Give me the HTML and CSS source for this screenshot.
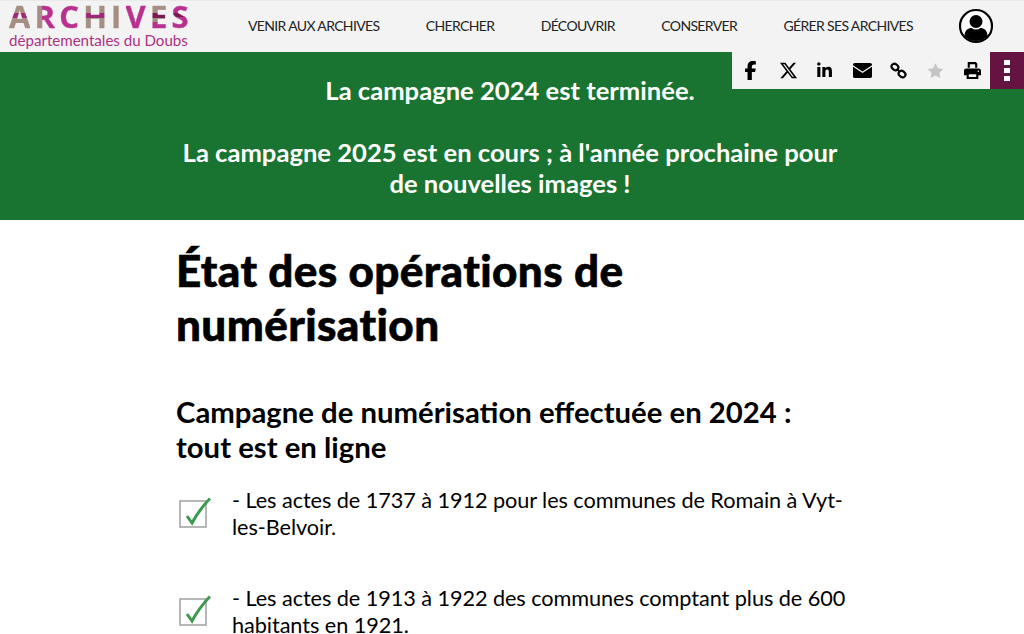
FILE: index.html
```
<!DOCTYPE html>
<html lang="fr">
<head>
<meta charset="utf-8">
<title>État des opérations de numérisation</title>
<link rel="stylesheet" href="styles.css">
</head>
<body>
<header class="header">
  <a class="logo" href="#">
    <span class="logo-title"><span class="l l-a">A</span><span class="l l-r">R</span><span class="l l-c">C</span><span class="l l-a">H</span><span class="l l-i">I</span><span class="l l-c">V</span><span class="l l-e">E</span><span class="l l-s">S</span></span>
    <span class="logo-sub">départementales du Doubs</span>
  </a>
  <nav class="nav">
    <a href="#">VENIR AUX ARCHIVES</a>
    <a href="#">CHERCHER</a>
    <a href="#">DÉCOUVRIR</a>
    <a href="#">CONSERVER</a>
    <a href="#">GÉRER SES ARCHIVES</a>
  </nav>
  <svg class="user" viewBox="0 0 36 36" aria-hidden="true">
    <circle cx="18" cy="18" r="16" fill="#fff" stroke="#000" stroke-width="2.2"/>
    <circle cx="18" cy="13.5" r="6.500"/>
    <path d="M6.500 28c0-6 4-8 7-8 1.500 1 3 1.500 4.500 1.500s3-.5 4.500-1.500c3 0 7 2 7 8-3 3.500-7 5-11.500 5s-8.500-1.500-11.500-5z"/>
  </svg>
</header>
<section class="banner">
  <p>La campagne 2024 est terminée.</p>
  <p>La campagne 2025 est en cours ; à l'année prochaine pour de nouvelles images !</p>
</section>
<div class="toolbar">
  <svg class="tool tool-f" viewBox="0 0 320 512"><path d="M80 299v213h116V299h87l18-97H196v-35c0-51 20-71 72-71 16 0 29 0 36 1V9c-14-4-49-8-69-8C129 1 80 51 80 158v44H14v97z"/></svg>
  <svg class="tool tool-x" viewBox="0 0 24 24"><path d="M18.244 2.25h3.308l-7.227 8.26 8.502 11.24H16.17l-5.214-6.817L4.99 21.75H1.68l7.73-8.835L1.254 2.25H8.08l4.713 6.231zm-1.161 17.52h1.833L7.084 4.126H5.117z"/></svg>
  <svg class="tool" viewBox="0 0 448 512"><path d="M100 448H7V149h93zM53 108C24 108 0 83 0 54a54 54 0 0 1 107 0c0 29-24 54-54 54zm395 340h-93V302c0-35-1-79-48-79-48 0-56 38-56 77v148h-93V149h89v41h1c12-24 43-48 88-48 94 0 112 62 112 142z"/></svg>
  <svg class="tool tool-mail" viewBox="0 0 512 400"><path d="M0 48C0 22 22 0 48 0h416c26 0 48 22 48 48v12L256 230 0 60zM0 100l256 170 256-170v252c0 26-22 48-48 48H48c-26 0-48-22-48-48z"/></svg>
  <svg class="tool" viewBox="0 0 24 24" fill="none" stroke="#000" stroke-width="3"><rect x="2" y="3" width="10" height="8" rx="4" transform="rotate(40 7 7)"/><rect x="12" y="13" width="10" height="8" rx="4" transform="rotate(40 17 17)"/><path d="M10 10l4 4" stroke-width="2.500"/></svg>
  <svg class="tool tool-star" viewBox="0 0 576 512"><path fill="#c4c4c4" d="M288 10l82 166 183 27-132 129 31 182-164-86-164 86 31-182L23 203l183-27z"/></svg>
  <svg class="tool" viewBox="0 0 512 512"><path d="M112 0h240l48 48v128h-64V64H176v112h-64zM64 192h384c35 0 64 29 64 64v144h-80v112H80V400H0V256c0-35 29-64 64-64zm80 176v80h224v-80zm288-112a24 24 0 1 0 0 48 24 24 0 0 0 0-48z"/></svg>
  <div class="more"><span></span><span></span><span></span></div>
</div>
<main class="main">
  <h1>État des opérations de numérisation</h1>
  <h2>Campagne de numérisation effectuée en 2024 : tout est en ligne</h2>
  <div class="item">
    <svg class="check" viewBox="0 0 32 34" aria-hidden="true"><rect x="1" y="5" width="26" height="26" fill="#fff" stroke="#a0a0a0" stroke-width="1.500"/><path d="M8 20l5 7Q20 14 31 2.500" fill="none" stroke="#3c9a4e" stroke-width="3"/></svg>
    <p>- Les actes de 1737 à 1912 pour les communes de Romain à Vyt-les-Belvoir.</p>
  </div>
  <div class="item">
    <svg class="check" viewBox="0 0 32 34" aria-hidden="true"><rect x="1" y="5" width="26" height="26" fill="#fff" stroke="#a0a0a0" stroke-width="1.500"/><path d="M8 20l5 7Q20 14 31 2.500" fill="none" stroke="#3c9a4e" stroke-width="3"/></svg>
    <p>- Les actes de 1913 à 1922 des communes comptant plus de 600 habitants en 1921.</p>
  </div>
</main>
</body>
</html>
```
FILE: styles.css
```
* { box-sizing: border-box; }
html, body { margin: 0; height: 634px; overflow: hidden; }
body { font-family: Lato, sans-serif; color: #000; background: #fff; position: relative; font-variant-ligatures: none; }
a { color: inherit; text-decoration: none; }
p { margin: 0; }
.header { height: 52px; background: #f3f3f3; border-top: 1px solid #eaeaea; display: flex; align-items: center; padding-left: 9px; }
.logo { width: 239px; display: flex; flex-direction: column; flex: none; height: 51px; padding-top: 2px; }
.logo-title { height: 27px; display: flex; justify-content: flex-start; white-space: nowrap; }
.l { display: block; height: 27px; font: 700 31px/27px "Open Sans", sans-serif; margin-right: 4.200px; color: transparent; -webkit-text-stroke: .4px transparent; -webkit-background-clip: text; background-clip: text; }
.l-a { background-image: linear-gradient(#a58f82 10px, #9c2a78 10px, #9c2a78 15px, #a58f82 15px); }
.l-r { background-image: linear-gradient(90deg, #a58f82 7px, #b9318e 7px); }
.l-c { background-image: linear-gradient(#b9318e, #b9318e); }
.l-i { background-image: linear-gradient(#a58f82, #a58f82); }
.l-e { background-image: linear-gradient(#a58f82 10px, #7a1a55 10px, #7a1a55 15px, #a58f82 15px, #a58f82 19px, #b9318e 19px); }
.l-s { background-image: linear-gradient(#b9318e 10px, #7a1a55 10px, #7a1a55 14px, #b9318e 14px); margin-right: 0; }
.logo-sub { font: 15.100px/16px Lato, sans-serif; color: #ab3187; white-space: nowrap; margin-top: 2px; }
.nav { display: flex; gap: 46.400px; font-size: 14px; letter-spacing: -.65px; color: #222; white-space: nowrap; margin-top: -2px; }
.user { width: 36px; height: 36px; margin-left: 45px; flex: none; margin-top: -1px; }
.banner { height: 168px; background: #1a7431; color: #fff; font-weight: 700; font-size: 25.600px; line-height: 31.500px; text-align: center; padding: 23px 179px 0 175px; display: flex; flex-direction: column; gap: 30px; }
.toolbar { position: absolute; top: 52px; right: 0; width: 292px; height: 37px; background: #f3f3f3; display: flex; align-items: center; padding-left: 10px; }
.tool { width: 17px; height: 17px; margin-right: 20px; flex: none; }
.tool-f { height: 19px; }
.tool-x { width: 19px; height: 19px; margin-right: 18px; }
.tool-mail { width: 19px; margin-right: 18px; }
.more { position: absolute; right: 0; top: 0; width: 34px; height: 37px; background: #651340; display: flex; flex-direction: column; align-items: center; justify-content: center; gap: 3px; }
.more span { width: 6px; height: 5px; background: #fff; }
.main { width: 670px; margin-left: 177px; }
h1 { font: 900 44px/54px Lato, sans-serif; margin: 23px 0 0 -1px; -webkit-text-stroke: .6px #000; letter-spacing: .4px; }
h2 { font: 700 29.300px/35px Lato, sans-serif; margin: 43px 0 0 -1px; }
.item { display: flex; gap: 21px; font-size: 21.700px; letter-spacing: -.07px; line-height: 27px; margin-top: 23px; align-items: flex-start; }
.item + .item { margin-top: 44px; }
.check { width: 32px; height: 34px; flex: none; margin-left: 2px; margin-top: 9px; }
.item p { margin: 0; width: 615px; }
```
